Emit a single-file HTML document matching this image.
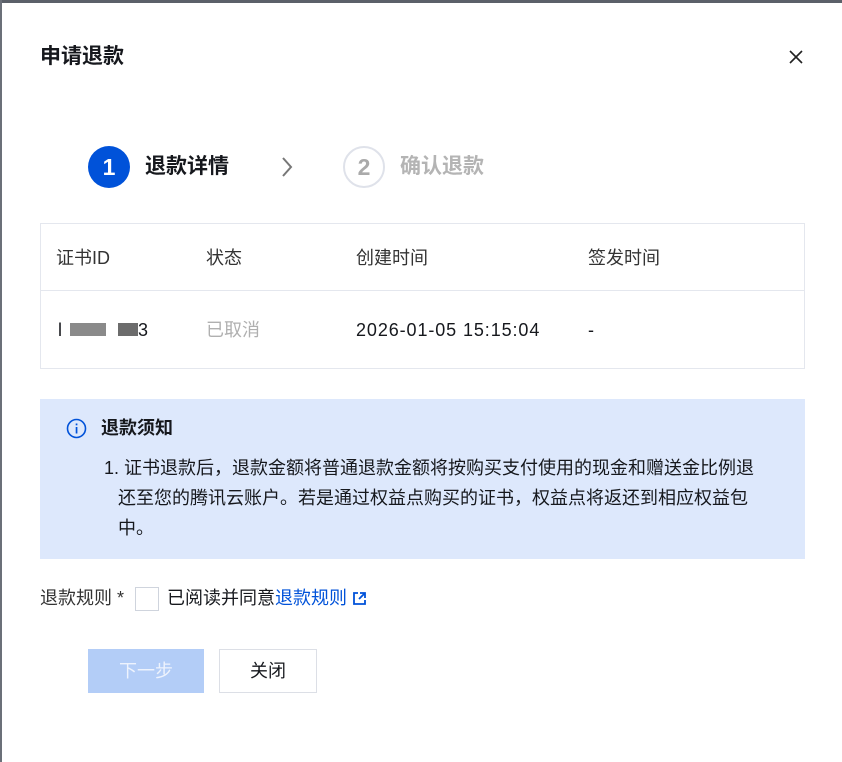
<!DOCTYPE html>
<html><head><meta charset="utf-8"><style>
*{margin:0;padding:0;box-sizing:border-box}
body{width:842px;height:762px;background:#fff;position:relative;overflow:hidden;font-family:"Liberation Sans","Noto Sans CJK SC",sans-serif;color:#16181d}
.a{position:absolute;white-space:nowrap}
.t{font-size:18px;line-height:24px}
</style></head><body>
<div class="a" style="left:0;top:0;width:842px;height:3px;background:#5b6069"></div>
<div class="a" style="left:0;top:0;width:2px;height:762px;background:#6b7079"></div>
<div class="a" style="left:40px;top:43px;font-size:21px;font-weight:bold;line-height:28px">申请退款</div>
<svg class="a" style="left:789px;top:50px" width="14" height="14"><path d="M1 1L13 13M13 1L1 13" stroke="#222" stroke-width="1.6"/></svg>
<div class="a" style="left:88px;top:146px;width:42px;height:42px;border-radius:50%;background:#0052d9;color:#fff;font-size:23px;font-weight:bold;line-height:42px;text-align:center">1</div>
<div class="a" style="left:145px;top:152px;font-size:21px;font-weight:bold;line-height:30px">退款详情</div>
<svg class="a" style="left:280px;top:156px" width="14" height="22"><path d="M3 2L11 11L3 20" fill="none" stroke="#777" stroke-width="2"/></svg>
<div class="a" style="left:343px;top:146px;width:42px;height:42px;border-radius:50%;border:2px solid #dfe2ea;color:#aaa;font-size:23px;font-weight:bold;line-height:38px;text-align:center">2</div>
<div class="a" style="left:400px;top:152px;font-size:21px;font-weight:bold;line-height:30px;color:#b4b4b4">确认退款</div>
<div class="a" style="left:40px;top:223px;width:765px;height:146px;border:1px solid #e4e7ee"></div>
<div class="a" style="left:40px;top:290px;width:765px;height:1px;background:#e4e7ee"></div>
<div class="a t" style="left:56px;top:246px;color:#333">证书ID</div>
<div class="a t" style="left:206px;top:246px;color:#333">状态</div>
<div class="a t" style="left:356px;top:246px;color:#333">创建时间</div>
<div class="a t" style="left:588px;top:246px;color:#333">签发时间</div>
<div class="a t" style="left:58px;top:318px">l</div>
<div class="a" style="left:70px;top:323px;width:36px;height:13px;background:#8a8a8a"></div>
<div class="a" style="left:118px;top:323px;width:20px;height:13px;background:#6c6c6c"></div>
<div class="a t" style="left:138px;top:318px">3</div>
<div class="a t" style="left:206px;top:318px;color:#b0b0b0">已取消</div>
<div class="a t" style="left:356px;top:318px;letter-spacing:0.9px">2026-01-05 15:15:04</div>
<div class="a t" style="left:588px;top:318px">-</div>
<div class="a" style="left:40px;top:399px;width:765px;height:160px;background:#dde8fc"></div>
<svg class="a" style="left:66px;top:418px" width="21" height="21"><circle cx="10.5" cy="10.5" r="9" fill="none" stroke="#0052d9" stroke-width="1.6"/><rect x="9.7" y="9" width="1.7" height="6.5" fill="#0052d9"/><rect x="9.7" y="5.5" width="1.7" height="1.8" fill="#0052d9"/></svg>
<div class="a t" style="left:101px;top:416px;font-weight:bold">退款须知</div>
<div class="a" style="left:104px;top:453px;font-size:18px;line-height:30px;white-space:normal;width:700px">1. 证书退款后，退款金额将普通退款金额将按购买支付使用的现金和赠送金比例退<br><span style="padding-left:14px">还至您的腾讯云账户。若是通过权益点购买的证书，权益点将返还到相应权益包</span><br><span style="padding-left:14px">中。</span></div>
<div class="a t" style="left:40px;top:586px;color:#333">退款规则 *</div>
<div class="a" style="left:135px;top:587px;width:24px;height:24px;border:1px solid #cfd4dd"></div>
<div class="a t" style="left:167px;top:586px">已阅读并同意<span style="color:#0052d9">退款规则</span><svg style="margin-left:5px;vertical-align:-2px" width="15" height="15"><path d="M6 2H2V13H13V9" fill="none" stroke="#0052d9" stroke-width="1.8"/><path d="M8 2H13V7M13 2L7 8" fill="none" stroke="#0052d9" stroke-width="1.8"/></svg></div>
<div class="a" style="left:88px;top:649px;width:116px;height:44px;background:#b3cdf7;color:#eef3fd;font-size:18px;line-height:44px;text-align:center">下一步</div>
<div class="a" style="left:219px;top:649px;width:98px;height:44px;border:1px solid #dcdfe6;font-size:18px;line-height:42px;text-align:center">关闭</div>
</body></html>
